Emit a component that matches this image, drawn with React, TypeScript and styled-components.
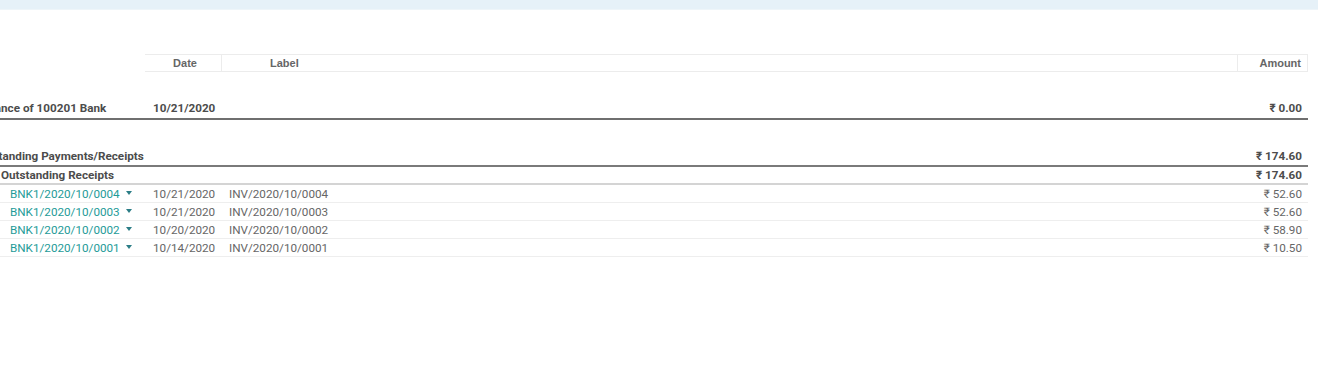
import React from "react";
import styled, { createGlobalStyle } from "styled-components";

const GlobalStyle = createGlobalStyle`
  body {
    margin: 0;
    background: #fff;
    font-family: Roboto, "Noto Sans", "DejaVu Sans", sans-serif;
    font-size: 11.7px;
    color: #666;
    overflow: hidden;
  }
`;

const TopBar = styled.div`
  height: 9px;
  width: 1318px;
  background: #e6f1f8;
  border-bottom: 1px solid #eef5f9;
`;

const Report = styled.div`
  margin-left: -30px;
  width: 1338px;
  padding-top: 44px;
`;

const Row = styled.div<{ $h?: number; $line?: string; $lineW?: number; $mt?: number }>`
  display: grid;
  grid-template-columns: 175px 77px 1fr 70px;
  align-items: center;
  height: ${(p) => p.$h ?? 17}px;
  margin-top: ${(p) => p.$mt ?? 0}px;
  border-bottom: ${(p) => p.$lineW ?? 1}px solid ${(p) => p.$line ?? "#eeeeee"};
`;

const HeadRow = styled.div`
  display: grid;
  grid-template-columns: 175px 77px 1fr 70px;
  height: 18px;
`;

const HeadCell = styled.div<{ $align?: string; $pl?: number; $pr?: number; $first?: boolean }>`
  font-family: "Liberation Sans", Arial, sans-serif;
  font-weight: bold;
  font-size: 11px;
  color: #666;
  display: flex;
  align-items: center;
  justify-content: ${(p) => p.$align ?? "center"};
  padding: 0 ${(p) => p.$pr ?? 0}px 0 ${(p) => p.$pl ?? 0}px;
  border: ${(p) => (p.$first ? "none" : "1px solid #ececec")};
  & + & {
    border-left: none;
  }
`;

const Cell = styled.div<{ $bold?: boolean; $right?: boolean; $indent?: number; $link?: boolean }>`
  font-weight: ${(p) => (p.$bold ? 700 : 400)};
  color: ${(p) => (p.$link ? "#1e9b98" : p.$bold ? "#4c4c4c" : "#666")};
  padding-left: ${(p) => p.$indent ?? 0}px;
  padding-right: ${(p) => (p.$right ? 6 : 0)}px;
  white-space: nowrap;
  display: flex;
  align-items: center;
  justify-content: ${(p) => (p.$right ? "flex-end" : "flex-start")};
  line-height: 14px;
`;

const Caret = styled.span`
  display: inline-block;
  margin-left: 6px;
  width: 0;
  height: 0;
  border-left: 3.5px solid transparent;
  border-right: 3.5px solid transparent;
  border-top: 4px solid #2b7d86;
  position: relative;
  top: -1px;
`;

const lines = [
  { ref: "BNK1/2020/10/0004", date: "10/21/2020", label: "INV/2020/10/0004", amount: "₹ 52.60" },
  { ref: "BNK1/2020/10/0003", date: "10/21/2020", label: "INV/2020/10/0003", amount: "₹ 52.60" },
  { ref: "BNK1/2020/10/0002", date: "10/20/2020", label: "INV/2020/10/0002", amount: "₹ 58.90" },
  { ref: "BNK1/2020/10/0001", date: "10/14/2020", label: "INV/2020/10/0001", amount: "₹ 10.50" },
];

const App = () => {
  return (
    <>
      <GlobalStyle />
      <TopBar />
      <Report>
        <HeadRow>
          <HeadCell $first />
          <HeadCell $pl={4}>Date</HeadCell>
          <HeadCell $align="flex-start" $pl={48}>Label</HeadCell>
          <HeadCell $align="flex-end" $pr={6}>Amount</HeadCell>
        </HeadRow>

        <Row $h={20} $mt={26} $line="#6f6f6f" $lineW={2}>
          <Cell $bold $indent={8}>Balance of 100201 Bank</Cell>
          <Cell $bold $indent={8}>10/21/2020</Cell>
          <Cell />
          <Cell $bold $right>₹ 0.00</Cell>
        </Row>

        <Row $h={19} $mt={26} $line="#7a7a7a" $lineW={2}>
          <Cell $bold $indent={4}>Outstanding Payments/Receipts</Cell>
          <Cell />
          <Cell />
          <Cell $bold $right>₹ 174.60</Cell>
        </Row>

        <Row $h={16} $line="#d4d4d4" $lineW={2}>
          <Cell $bold $indent={31}>Outstanding Receipts</Cell>
          <Cell />
          <Cell />
          <Cell $bold $right>₹ 174.60</Cell>
        </Row>

        {lines.map((l) => (
          <Row key={l.ref} $h={17}>
            <Cell $link $indent={40}>
              {l.ref}
              <Caret />
            </Cell>
            <Cell $indent={8}>{l.date}</Cell>
            <Cell $indent={7}>{l.label}</Cell>
            <Cell $right>{l.amount}</Cell>
          </Row>
        ))}
      </Report>
    </>
  );
};

export default App;
